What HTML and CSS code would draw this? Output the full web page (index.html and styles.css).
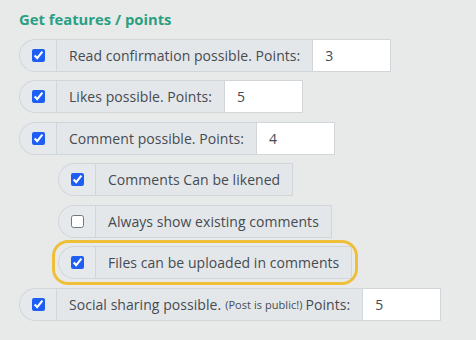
FILE: index.html
```html
<!DOCTYPE html>
<html>
<head>
<meta charset="utf-8">
<title>Get features / points</title>
<link rel="stylesheet" href="styles.css">
</head>
<body>
<div class="panel">
  <h3 class="title">Get features / points</h3>

  <div class="group">
    <span class="check"><input type="checkbox" checked></span>
    <span class="label">Read confirmation possible. Points:</span>
    <input class="points" type="text" value="3">
  </div>

  <div class="group">
    <span class="check"><input type="checkbox" checked></span>
    <span class="label">Likes possible. Points:</span>
    <input class="points" type="text" value="5">
  </div>

  <div class="group">
    <span class="check"><input type="checkbox" checked></span>
    <span class="label">Comment possible. Points:</span>
    <input class="points" type="text" value="4">
  </div>

  <div class="sub">
    <div class="group">
      <span class="check"><input type="checkbox" checked></span>
      <span class="label">Comments Can be likened</span>
    </div>
    <div class="group">
      <span class="check"><input type="checkbox"></span>
      <span class="label">Always show existing comments</span>
    </div>
    <div class="group marked">
      <span class="check"><input type="checkbox" checked></span>
      <span class="label">Files can be uploaded in comments</span>
    </div>
  </div>

  <div class="group">
    <span class="check"><input type="checkbox" checked></span>
    <span class="label">Social sharing possible. <small>(Post is public!)</small> Points:</span>
    <input class="points" type="text" value="5">
  </div>
</div>
</body>
</html>
```

FILE: styles.css
```css
body {
  margin: 0;
  background: #e8eaea;
  font-family: "Open Sans", "DejaVu Sans", sans-serif;
  color: #464b51;
}

.panel {
  padding: 8px 0 0 19px;
  display: flex;
  flex-direction: column;
  gap: 8.5px;
}

.title {
  margin: 0;
  font-size: 14.8px;
  font-weight: 700;
  color: #2a9f82;
  line-height: 22px;
}

.group {
  display: flex;
  align-items: stretch;
  height: 33px;
  align-self: flex-start;
}

.sub {
  display: flex;
  flex-direction: column;
  gap: 8.5px;
  padding-left: 39px;
}

.check {
  width: 36px;
  display: flex;
  align-items: center;
  justify-content: center;
  background: #e6e9ec;
  border: 1px solid #d1d6db;
  border-right: none;
  border-radius: 17px 0 0 17px;
}

.check input {
  margin: 0 0 0 1px;
  width: 13px;
  height: 13px;
  accent-color: #1e5ef2;
}

.label {
  display: flex;
  align-items: center;
  padding: 0 12px 0 12px;
  background: #e4e7ea;
  border: 1px solid #d1d6db;
  font-size: 14px;
  letter-spacing: 0.05px;
  white-space: nowrap;
}

.label small {
  font-size: 11px;
  margin: 0 3px 0 4px;
}

.points {
  width: 78px;
  box-sizing: border-box;
  border: 1px solid #d1d6db;
  border-left: none;
  background: #fff;
  padding: 0 12px;
  font-family: inherit;
  font-size: 14px;
  color: #464b51;
  outline: none;
}

.marked {
  outline: 3px solid #efbf3a;
  outline-offset: 3px;
  border-radius: 10px;
}
```
